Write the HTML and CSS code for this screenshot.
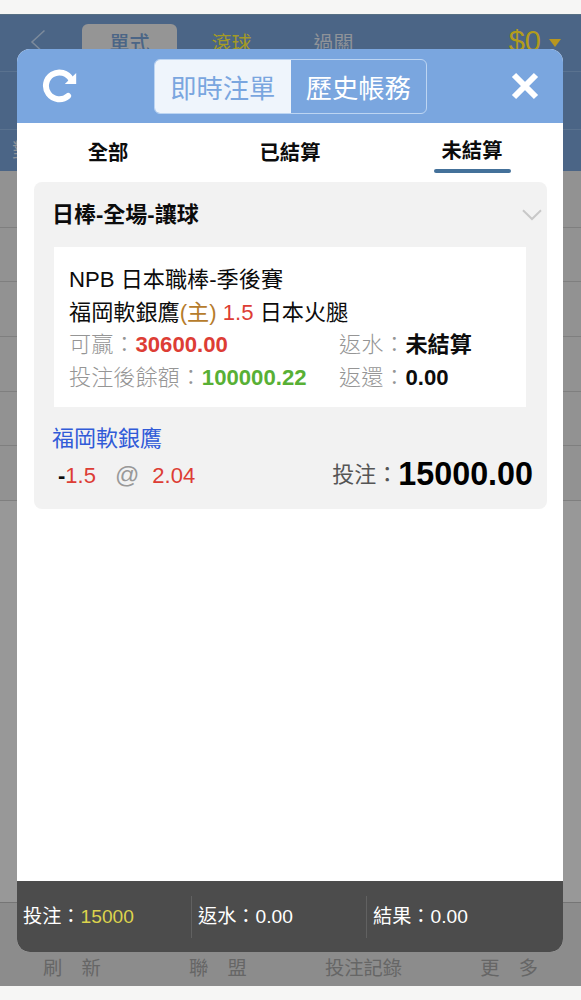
FILE: index.html
```html
<!DOCTYPE html>
<html lang="zh-Hant">
<head>
<meta charset="utf-8">
<meta name="viewport" content="width=device-width, initial-scale=1">
<title>即時注單</title>
<link rel="stylesheet" href="styles.css">
</head>
<body>
<div class="screen">
  <header class="app-head">
    <div class="app-bar">
      <svg class="back" viewBox="0 0 16 26"><path d="M14.500 1.500 2 13l12.500 11.500"/></svg>
      <span class="mode mode-on">單式</span>
      <span class="mode mode-live">滾球</span>
      <span class="mode">過關</span>
      <span class="wallet">$0<i class="caret"></i></span>
    </div>
    <div class="app-sub"></div>
    <div class="app-cols"><span>對</span></div>
  </header>
  <main class="rows">
    <div class="row"></div><div class="row"></div><div class="row"></div>
    <div class="row"></div><div class="row"></div><div class="row"></div>
  </main>
  <nav class="app-nav">
    <span>刷　新</span><span>聯　盟</span><span>投注記錄</span><span>更　多</span>
  </nav>
</div>

<section class="dialog">
  <header class="dialog-head">
    <svg class="refresh" viewBox="0 0 36 36"><path class="arc" d="M26.100 28A13.400 13.400 0 1 1 29.200 11.600"/><path class="tip" d="M34.200 5V16H22.800z"/></svg>
    <div class="switch"><span class="seg seg-on">即時注單</span><span class="seg">歷史帳務</span></div>
    <svg class="close" viewBox="0 0 28 28"><path d="M3 3 25 25M25 3 3 25"/></svg>
  </header>
  <nav class="tabs">
    <span class="tab">全部</span><span class="tab">已結算</span><span class="tab tab-on">未結算</span>
  </nav>
  <div class="content">
    <article class="bet">
      <div class="bet-head">
        <h2>日棒-全場-讓球</h2>
        <svg class="chevron" viewBox="0 0 20 12"><path d="M1 1.300 10 10 19 1.300"/></svg>
      </div>
      <div class="match">
        <p>NPB 日本職棒-季後賽</p>
        <p>福岡軟銀鷹<span class="home">(主)</span> <span class="red">1.5</span> 日本火腿</p>
        <div class="facts">
          <p><span class="label">可贏：</span><b class="red">30600.00</b></p>
          <p><span class="label">返水：</span><b>未結算</b></p>
          <p><span class="label">投注後餘額：</span><b class="green">100000.22</b></p>
          <p><span class="label">返還：</span><b>0.00</b></p>
        </div>
      </div>
      <div class="pick">福岡軟銀鷹</div>
      <div class="stake">
        <span class="odds"><b>-</b><span class="red">1.5</span><span class="at">@</span><span class="red">2.04</span></span>
        <span class="amount"><span class="amount-label">投注：</span><b>15000.00</b></span>
      </div>
    </article>
  </div>
  <footer class="totals">
    <div class="total">投注：<span class="yellow">15000</span></div>
    <div class="total">返水：0.00</div>
    <div class="total">結果：0.00</div>
  </footer>
</section>
</body>
</html>
```
FILE: styles.css
```css
* { box-sizing: border-box; }
body {
  margin: 0;
  height: 1000px;
  padding: 14px 0;
  position: relative;
  overflow: hidden;
  background: #f6f6f5;
  font-family: "Liberation Sans", "Noto Sans CJK TC", sans-serif;
  color: #0c0c0c;
}
p, h2 { margin: 0; }
svg { display: block; fill: none; flex: none; }

/* dimmed page behind the dialog */
.screen { display: flex; flex-direction: column; height: 972px; background: #989898; }
.app-head { background: #4b6586; height: 157px; border-top: 1px solid #577084; }
.app-bar {
  display: flex;
  align-items: flex-start;
  height: 57px;
  padding: 9px 20px 0 30px;
  border-bottom: 1px solid #5a728f;
  color: #8f9399;
  font-size: 20px;
  line-height: 40px;
}
.back { width: 16px; height: 26px; margin: 5px 36px 0 0; stroke: #7d8b9c; stroke-width: 1.5; }
.mode { width: 95px; margin-right: 7px; text-align: center; }
.mode-on { background: #959595; color: #4b6586; border-radius: 6px 6px 0 0; font-weight: 500; }
.mode-live { color: #a39a26; }
.wallet { display: flex; margin-left: auto; color: #b39c1b; font-size: 29px; line-height: 35px; }
.caret { margin: 15px 0 0 8px; width: 12px; height: 8px; background: #b8961e; clip-path: polygon(0 0, 100% 0, 50% 100%); }
.app-sub { height: 58px; border-bottom: 1px solid #5a728f; }
.app-cols { padding: 6px 0 0 12px; color: #8f9399; font-size: 20px; line-height: 30px; }
.rows { flex: 1; padding-top: 2px; background: linear-gradient(#929292 2px, transparent 2px); border-bottom: 1px solid #757575; }
.row { height: 54.700px; background: #929292; border-bottom: 1px solid #7f7f7f; }
.app-nav {
  display: flex;
  justify-content: space-between;
  align-items: flex-end;
  height: 83px;
  padding: 0 43px 2px;
  background: #8c8c8c;
  color: #666;
  font-size: 19.300px;
  line-height: 30px;
}
.app-nav span:nth-child(2) { margin-left: 10px; }

/* dialog */
.dialog {
  position: absolute;
  left: 17px;
  top: 49px;
  width: 546px;
  height: 903px;
  display: flex;
  flex-direction: column;
  background: #fff;
  border-radius: 13px;
  overflow: hidden;
}
.dialog-head {
  display: flex;
  align-items: center;
  height: 74px;
  padding: 0 24px 0 25px;
  background: #7aa6df;
}
.refresh { width: 36px; height: 36px; }
.refresh .arc { stroke: #fff; stroke-width: 6; stroke-linecap: round; }
.refresh .tip { fill: #fff; }
.close { width: 28px; height: 28px; margin-left: auto; stroke: #fff; stroke-width: 6; }
.switch {
  display: flex;
  width: 273px;
  height: 55px;
  margin-left: 76px;
  border: 1px solid #bdd5f2;
  border-radius: 6px;
  overflow: hidden;
}
.seg { flex: 1; text-align: center; font-size: 26.300px; line-height: 58px; color: #fff; }
.seg-on { background: #eff5fc; color: #7aa6df; }
.tabs {
  display: grid;
  grid-template-columns: repeat(3, 1fr);
  justify-items: center;
  height: 59px;
  font-size: 20.300px;
  font-weight: 700;
}
.tab { width: 77px; text-align: center; line-height: 61px; }
.tab-on { height: 50px; line-height: 57px; }
.tab-on::after {
  content: "";
  display: block;
  height: 4.500px;
  margin-top: -11.500px;
  background: #44719a;
  border-radius: 2px;
}
.content { flex: 1; padding: 0 16px 0 17px; }
.bet { height: 327px; padding: 0 15px 0 18px; background: #f2f2f2; border-radius: 8px; font-size: 22px; }
.bet-head { display: flex; justify-content: space-between; height: 65px; margin-right: -10px; }
.bet-head h2 { font-size: 22px; line-height: 65px; }
.chevron { width: 20px; height: 12px; margin-top: 27px; stroke: #c8c8c8; stroke-width: 2; }
.match { width: 472px; height: 160px; margin-left: 2px; padding: 17px 15px 0; background: #fff; }
.match p { line-height: 32.700px; white-space: nowrap; font-size: 22.150px; }
.facts { display: grid; grid-template-columns: 270px 1fr; }
.label { color: #959595; font-weight: 300; }
.home { color: #b67c2c; }
.red { color: #dd3d35; }
.green { color: #58b035; }
.pick { color: #315bd8; line-height: 32px; padding-top: 16px; }
.stake { display: flex; justify-content: space-between; line-height: 40px; }
.odds { padding-left: 6px; }
.at { color: #999; margin: 0 13px 0 19px; font-size: 24px; }
.amount { display: flex; margin-right: -1px; }
.amount-label { color: #555; }
.amount b { font-size: 32.300px; line-height: 38px; color: #000; }
.totals { display: flex; align-items: center; height: 71px; background: #4c4c4c; color: #fff; font-size: 19.200px; }
.total { width: 175px; height: 42px; padding-left: 6px; line-height: 41px; border-right: 1px solid #616161; }
.total:last-child { border: 0; }
.yellow { color: #ddd34c; }
```
